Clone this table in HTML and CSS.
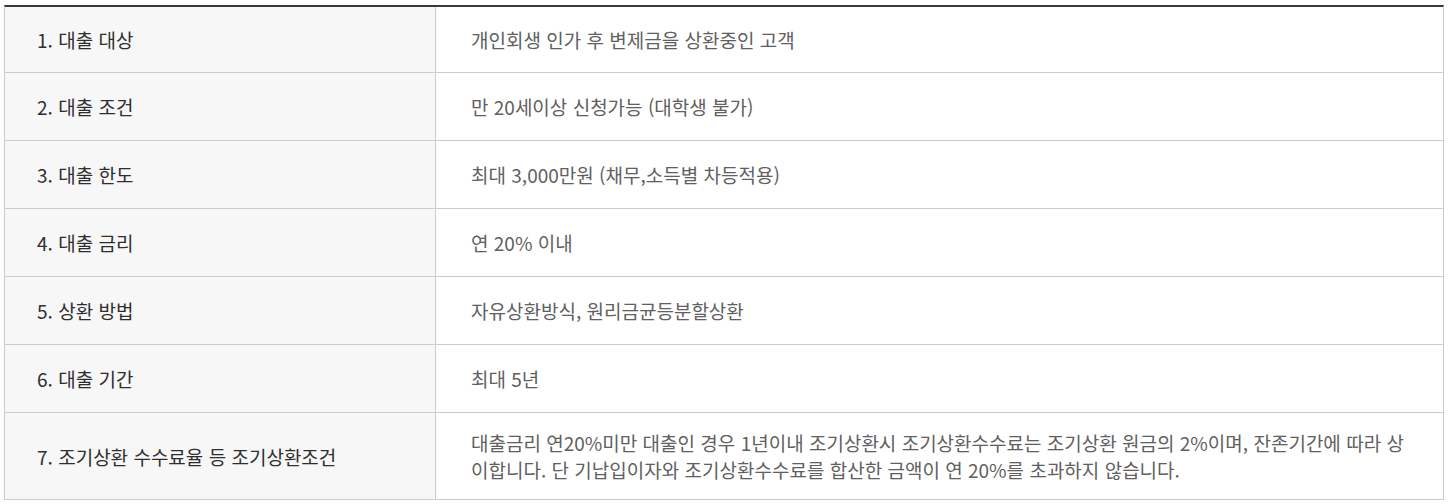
FILE: index.html
```html
<!DOCTYPE html>
<html lang="ko">
<head>
<meta charset="utf-8">
<title>대출 안내</title>
<link rel="stylesheet" href="styles.css">
</head>
<body>
<div class="info-table">
  <div class="row first">
    <div class="th">1. 대출 대상</div>
    <div class="td">개인회생 인가 후 변제금을 상환중인 고객</div>
  </div>
  <div class="row">
    <div class="th">2. 대출 조건</div>
    <div class="td">만 20세이상 신청가능 (대학생 불가)</div>
  </div>
  <div class="row">
    <div class="th">3. 대출 한도</div>
    <div class="td">최대 3,000만원 (채무,소득별 차등적용)</div>
  </div>
  <div class="row">
    <div class="th">4. 대출 금리</div>
    <div class="td">연 20% 이내</div>
  </div>
  <div class="row">
    <div class="th">5. 상환 방법</div>
    <div class="td">자유상환방식, 원리금균등분할상환</div>
  </div>
  <div class="row">
    <div class="th">6. 대출 기간</div>
    <div class="td">최대 5년</div>
  </div>
  <div class="row last">
    <div class="th">7. 조기상환 수수료율 등 조기상환조건</div>
    <div class="td">대출금리 연20%미만 대출인 경우 1년이내 조기상환시 조기상환수수료는 조기상환 원금의 2%이며, 잔존기간에 따라 상이합니다. 단 기납입이자와 조기상환수수료를 합산한 금액이 연 20%를 초과하지 않습니다.</div>
  </div>
</div>
</body>
</html>
```

FILE: styles.css
```css
html, body {
  margin: 0;
  padding: 0;
  background: #ffffff;
}

body {
  padding: 5px 4px 0;
  font-family: "Noto Sans CJK KR", "Noto Sans", sans-serif;
  font-size: 19px;
  line-height: 27px;
}

.info-table {
  border-top: 2px solid #363c3e;
  border-left: 1px solid #cccccc;
  border-right: 1px solid #cccccc;
}

.row {
  display: grid;
  grid-template-columns: 431px 1fr;
  min-height: 68px;
  box-sizing: border-box;
  border-bottom: 1px solid #cccccc;
}

.row.first {
  min-height: 66px;
}

.th {
  display: flex;
  align-items: center;
  background: #f7f7f7;
  border-right: 1px solid #cccccc;
  padding: 16px 20px 16px 32px;
  color: #2e2e2e;
}

.td {
  display: flex;
  align-items: center;
  padding: 16px 34px 16px 35px;
  color: #606060;
}

.row.last .td {
  display: block;
  align-self: center;
}
```
